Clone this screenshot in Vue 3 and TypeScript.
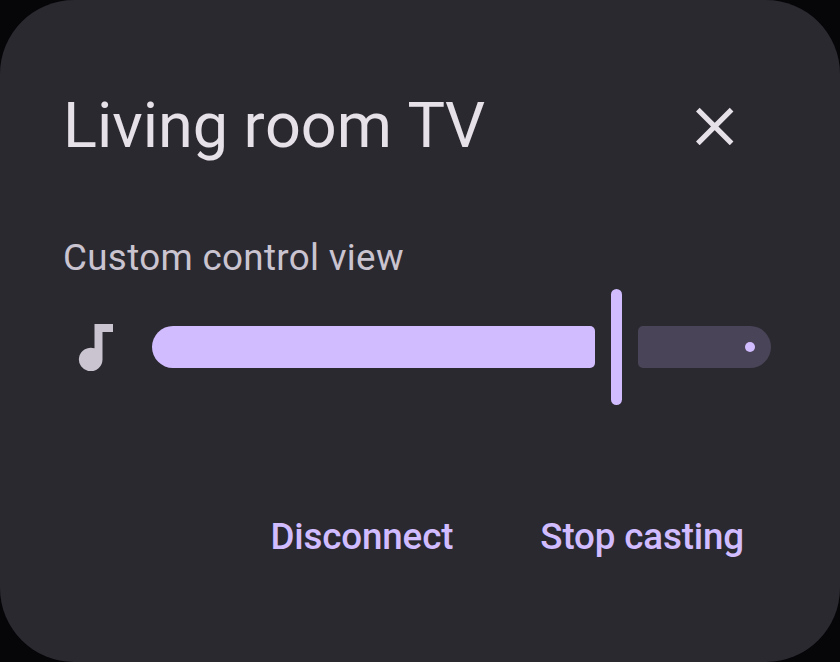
<script setup lang="ts">
import { ref } from 'vue'

const volume = ref(75)
const actions: string[] = ['Disconnect', 'Stop casting']
</script>

<template>
  <main class="dialog">
    <header class="header">
      <h1 class="title">Living room TV</h1>
      <button class="close" aria-label="Close">
        <svg width="38" height="38" viewBox="0 0 38 38"><path d="M1.8 2.6 35.6 36.4M35.6 2.6 1.8 36.4" fill="none" stroke="currentColor" stroke-width="5.2" /></svg>
      </button>
    </header>
    <p class="label">Custom control view</p>
    <div class="volume">
      <svg class="note" width="36" height="48" viewBox="0 0 36 48"><path d="M16.5 1H35V9H24.5V36.5A11.8 11.8 0 1 1 16.5 25.3Z" fill="currentColor" /></svg>
      <div class="slider" role="slider" :aria-valuenow="volume">
        <span class="active"></span>
        <span class="thumb"></span>
        <span class="rest"><i class="stop"></i></span>
      </div>
    </div>
    <footer class="actions">
      <button v-for="action in actions" :key="action" class="action">{{ action }}</button>
    </footer>
  </main>
</template>

<style>
body { background: #060608; }
</style>

<style scoped>
.dialog { box-sizing: border-box; width: 840px; height: 662px; padding: 84px 69px 0 63px; border-radius: 74px; background: #2b2930; color: #e6e0e9; font-family: Roboto, sans-serif; overflow: hidden; }
button { border: 0; padding: 0; background: none; color: inherit; font-family: inherit; }
.header { display: flex; justify-content: space-between; align-items: center; height: 84px; padding-right: 37px; }
.title { margin: 0; font-size: 63px; font-weight: 400; line-height: 84px; letter-spacing: -0.04px; font-kerning: none; white-space: nowrap; }
.close { display: flex; }
.label { margin: 68px 0 0; height: 53px; color: #cac4d0; font-size: 36.75px; line-height: 44px; letter-spacing: 0.33px; white-space: nowrap; }
.volume { display: flex; align-items: center; height: 116px; padding-left: 15px; }
.note { color: #cac4d0; flex: none; }
.slider { display: flex; align-items: center; margin-left: 38px; }
.active { width: 443px; height: 42px; border-radius: 21px 5px 5px 21px; background: #d0bcff; }
.thumb { width: 11px; height: 116px; margin: 0 15.5px 0 16px; border-radius: 6px; background: #d0bcff; }
.rest { box-sizing: border-box; display: flex; align-items: center; justify-content: flex-end; width: 133.5px; height: 42px; padding-right: 16px; border-radius: 5px 21px 21px 5px; background: #4a4458; }
.stop { width: 10.5px; height: 10.5px; border-radius: 50%; background: #d0bcff; }
.actions { display: flex; justify-content: flex-end; gap: 87px; margin-top: 108px; padding-right: 27px; }
.action { color: #d0bcff; font-size: 36.75px; line-height: 48px; font-weight: 500; letter-spacing: -0.15px; white-space: nowrap; }
</style>
